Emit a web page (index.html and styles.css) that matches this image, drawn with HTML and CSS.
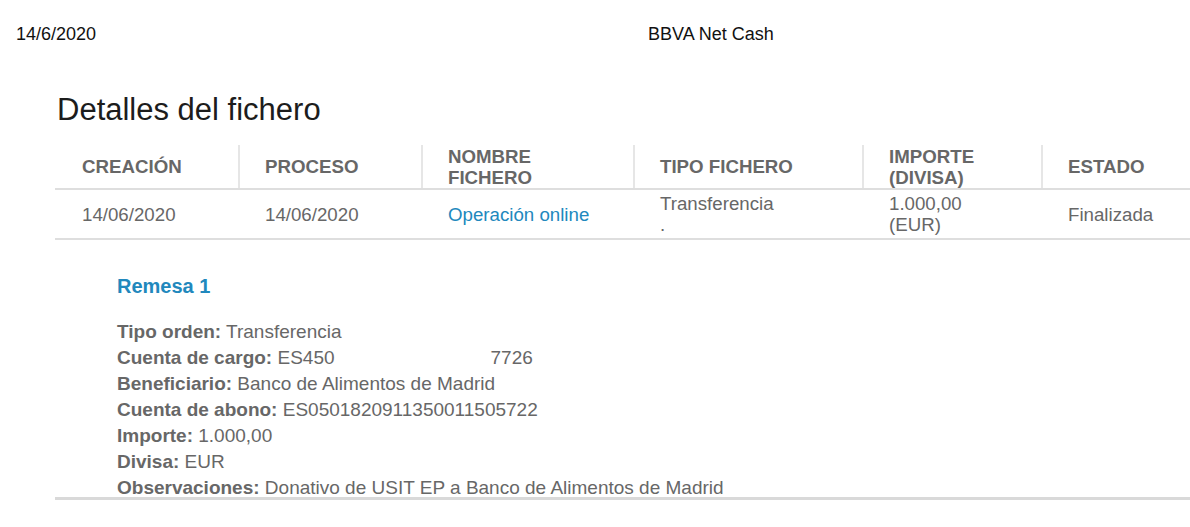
FILE: index.html
```html
<!DOCTYPE html>
<html lang="es">
<head>
    <meta charset="UTF-8">
    <title>BBVA Net Cash</title>
    <link rel="stylesheet" href="styles.css">
</head>
<body>
<div class="print-header">
    <span class="print-date">14/6/2020</span>
    <span class="print-title">BBVA Net Cash</span>
</div>

<div class="page">
    <h1 class="page-title">Detalles del fichero</h1>

    <table class="file-table">
        <thead>
            <tr>
                <th class="col-creacion">CREACIÓN</th>
                <th class="col-proceso">PROCESO</th>
                <th class="col-nombre">NOMBRE<br>FICHERO</th>
                <th class="col-tipo">TIPO FICHERO</th>
                <th class="col-importe">IMPORTE<br>(DIVISA)</th>
                <th class="col-estado">ESTADO</th>
            </tr>
        </thead>
        <tbody>
            <tr>
                <td>14/06/2020</td>
                <td>14/06/2020</td>
                <td><a class="file-link" href="#">Operación online</a></td>
                <td>Transferencia<br>.</td>
                <td>1.000,00<br>(EUR)</td>
                <td>Finalizada</td>
            </tr>
        </tbody>
    </table>

    <div class="remesa">
        <h2 class="remesa-title">Remesa 1</h2>
        <ul class="remesa-list">
            <li><b>Tipo orden:</b> Transferencia</li>
            <li><b>Cuenta de cargo:</b> ES450<span class="masked"></span>7726</li>
            <li><b>Beneficiario:</b> Banco de Alimentos de Madrid</li>
            <li><b>Cuenta de abono:</b> ES0501820911350011505722</li>
            <li><b>Importe:</b> 1.000,00</li>
            <li><b>Divisa:</b> EUR</li>
            <li><b>Observaciones:</b> Donativo de USIT EP a Banco de Alimentos de Madrid</li>
        </ul>
    </div>
</div>
</body>
</html>
```

FILE: styles.css
```css
:root {
    --text-grey: #676767;
    --line-grey: #dedede;
    --link-blue: #2188bd;
}

* {
    margin: 0;
    padding: 0;
    box-sizing: border-box;
}

body {
    font-family: 'Liberation Sans', Arial, sans-serif;
    background-color: #fff;
    color: #111;
    overflow: hidden;
}

.print-header {
    display: flex;
    padding: 24px 16px 0;
    font-size: 18px;
}

.print-date {
    width: 632px;
}

.page {
    padding-left: 55px;
}

.page-title {
    font-size: 31px;
    font-weight: normal;
    color: #1c1c1c;
    margin: 47px 0 17px 2px;
}

.file-table {
    width: 100%;
    table-layout: fixed;
    border-collapse: collapse;
    color: var(--text-grey);
    font-size: 18.7px;
    line-height: 21px;
    text-align: left;
}

.file-table th {
    height: 44px;
    padding: 0 0 0 25px;
    font-weight: bold;
    vertical-align: middle;
    border-bottom: 2px solid var(--line-grey);
    border-left: 2px solid #e6e6e6;
}

.file-table th:first-child {
    padding-left: 27px;
    border-left: none;
}

.file-table td {
    height: 50px;
    padding: 0 0 0 26px;
    vertical-align: middle;
    border-bottom: 2px solid var(--line-grey);
}

.file-table td:first-child {
    padding-left: 27px;
}

.col-creacion { width: 184px; }
.col-proceso { width: 183px; }
.col-nombre { width: 212px; }
.col-tipo { width: 229px; }
.col-importe { width: 179px; }

.file-link {
    color: var(--link-blue);
    text-decoration: none;
}

.remesa {
    padding: 35px 0 0 62px;
    border-bottom: 3px solid #d9d9d9;
}

.remesa-title {
    font-size: 20px;
    color: var(--link-blue);
    margin-bottom: 21px;
}

.remesa-list {
    list-style: none;
    color: var(--text-grey);
    font-size: 19px;
    line-height: 26px;
    margin-bottom: -4px;
}

.masked {
    display: inline-block;
    width: 156px;
}
```
